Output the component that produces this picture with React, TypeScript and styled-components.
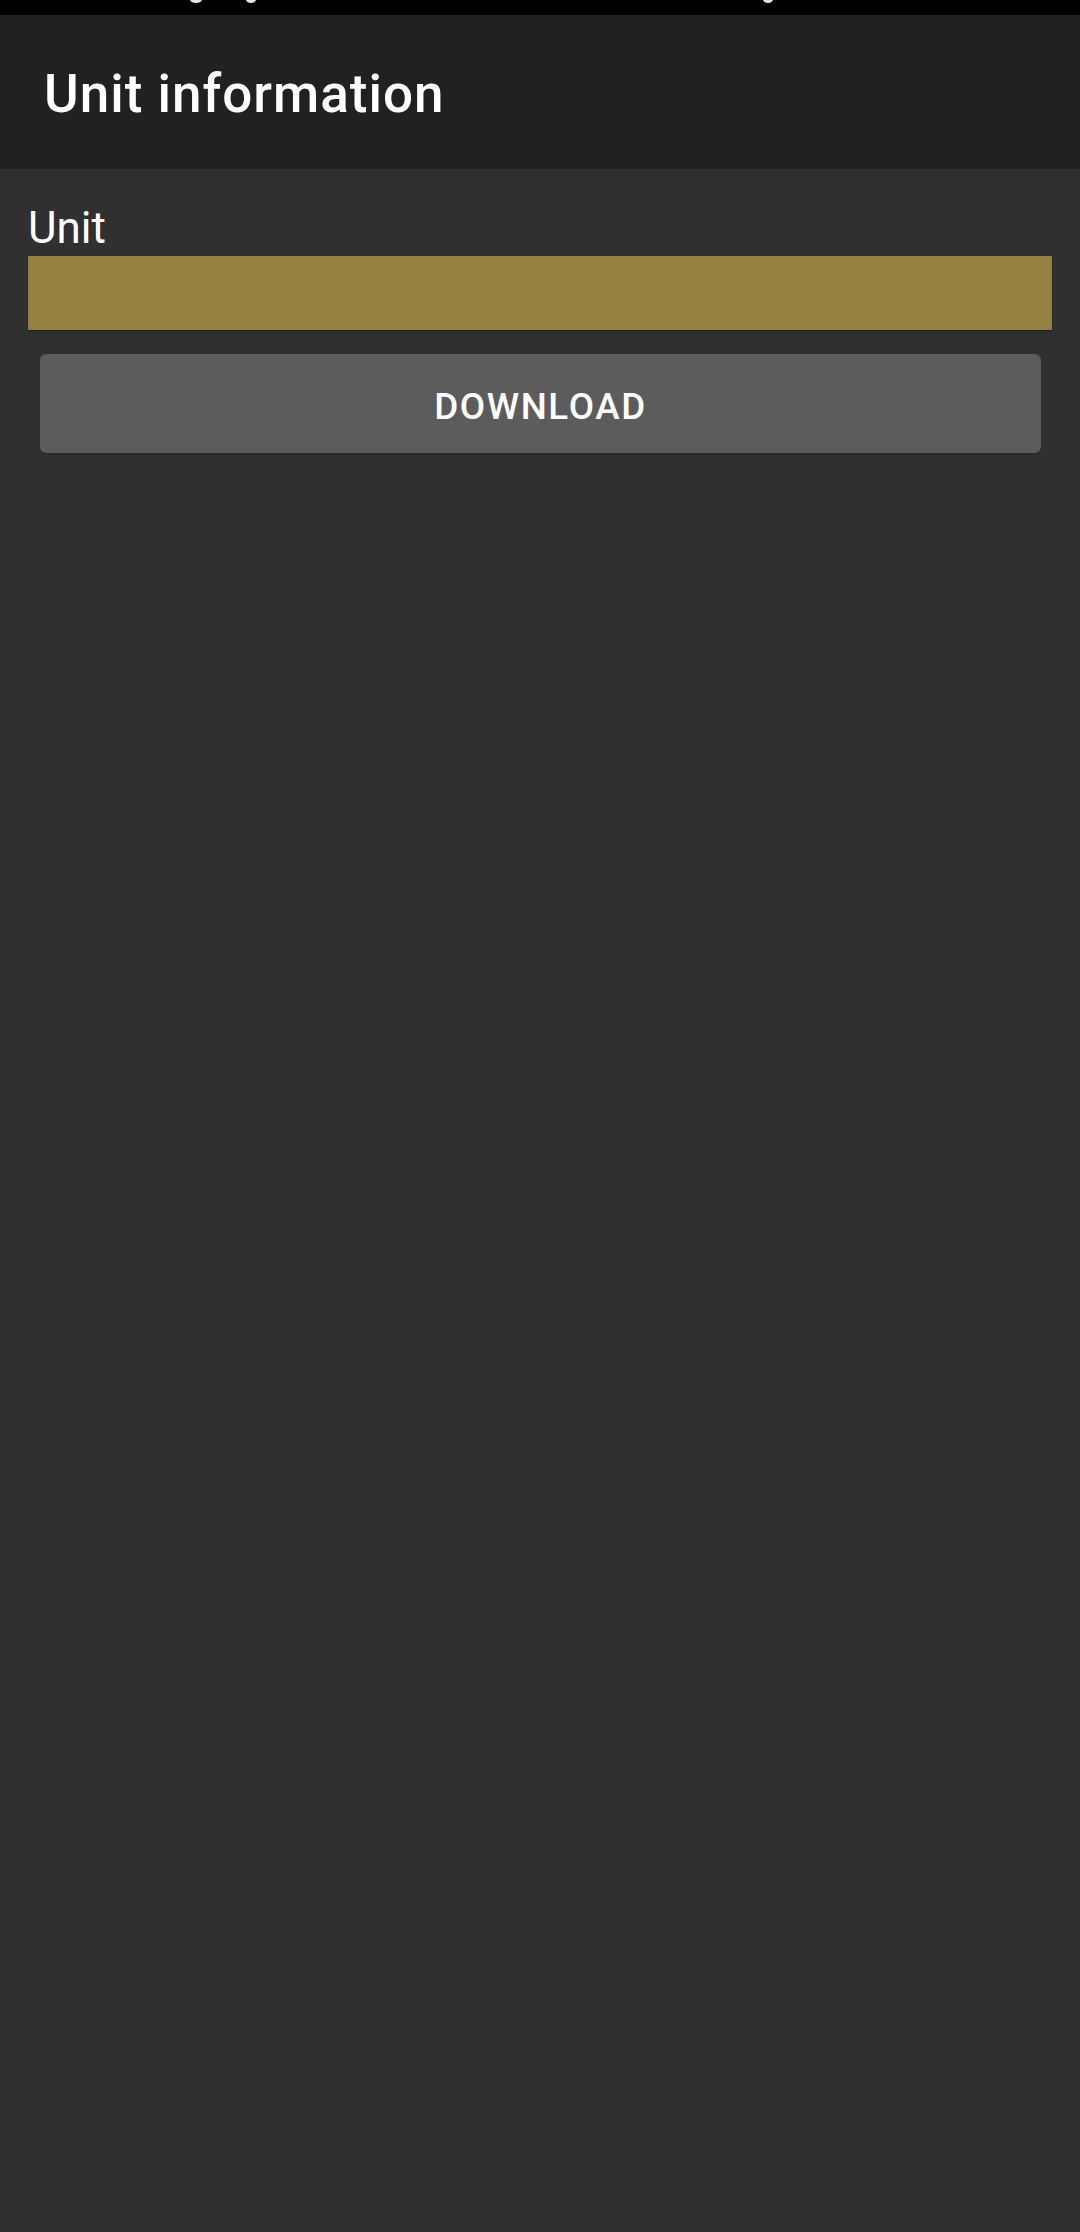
import React from 'react';
import styled, { createGlobalStyle } from 'styled-components';

const GlobalStyle = createGlobalStyle`
  html, body {
    margin: 0;
    padding: 0;
    background: #303030;
  }
  body {
    font-family: Roboto, 'Noto Sans', sans-serif;
    color: #ffffff;
  }
`;

const Screen = styled.div`
  width: 1080px;
  min-height: 2232px;
  display: flex;
  flex-direction: column;
  background: #303030;
`;

const StatusBar = styled.div`
  height: 15px;
  background: #000000;
  position: relative;
  overflow: hidden;
`;

const StatusDot = styled.span<{ left: number; w: number }>`
  position: absolute;
  top: -4px;
  left: ${({ left }) => left}px;
  width: ${({ w }) => w}px;
  height: 7px;
  border-radius: 50%;
  background: #e6e6e6;
`;

const Toolbar = styled.header`
  height: 154px;
  background: #212121;
  display: flex;
  align-items: center;
  padding: 4px 0 0 44px;
  box-sizing: border-box;
`;

const Title = styled.h1`
  margin: 0;
  font-size: 53px;
  font-weight: 500;
  letter-spacing: 1px;
  line-height: 1;
  color: #ffffff;
`;

const Content = styled.main`
  display: flex;
  flex-direction: column;
  padding: 33px 28px 0;
`;

const Label = styled.label`
  display: block;
  font-size: 44px;
  line-height: 52px;
  font-weight: 400;
  color: #ffffff;
  margin-bottom: 2px;
`;

const Field = styled.div`
  height: 74px;
  background: #948040;
  box-shadow: 0 1px 1px rgba(0, 0, 0, 0.35);
`;

const Button = styled.button`
  margin: 24px 11px 0 12px;
  height: 99px;
  border: none;
  border-radius: 6px;
  background: #5c5c5d;
  color: #ffffff;
  font-family: Roboto, 'Noto Sans', sans-serif;
  font-size: 36.75px;
  font-weight: 500;
  letter-spacing: 1.6px;
  text-transform: uppercase;
  display: flex;
  align-items: center;
  justify-content: center;
  padding: 5px 0 0;
  box-shadow: 0 1px 2px rgba(0, 0, 0, 0.25);
`;

export default function App() {
  return (
    <>
      <GlobalStyle />
      <Screen>
        <StatusBar>
          <StatusDot left={190} w={12} />
          <StatusDot left={246} w={10} />
          <StatusDot left={763} w={10} />
        </StatusBar>
        <Toolbar>
          <Title>Unit information</Title>
        </Toolbar>
        <Content>
          <Label>Unit</Label>
          <Field />
          <Button>Download</Button>
        </Content>
      </Screen>
    </>
  );
}
